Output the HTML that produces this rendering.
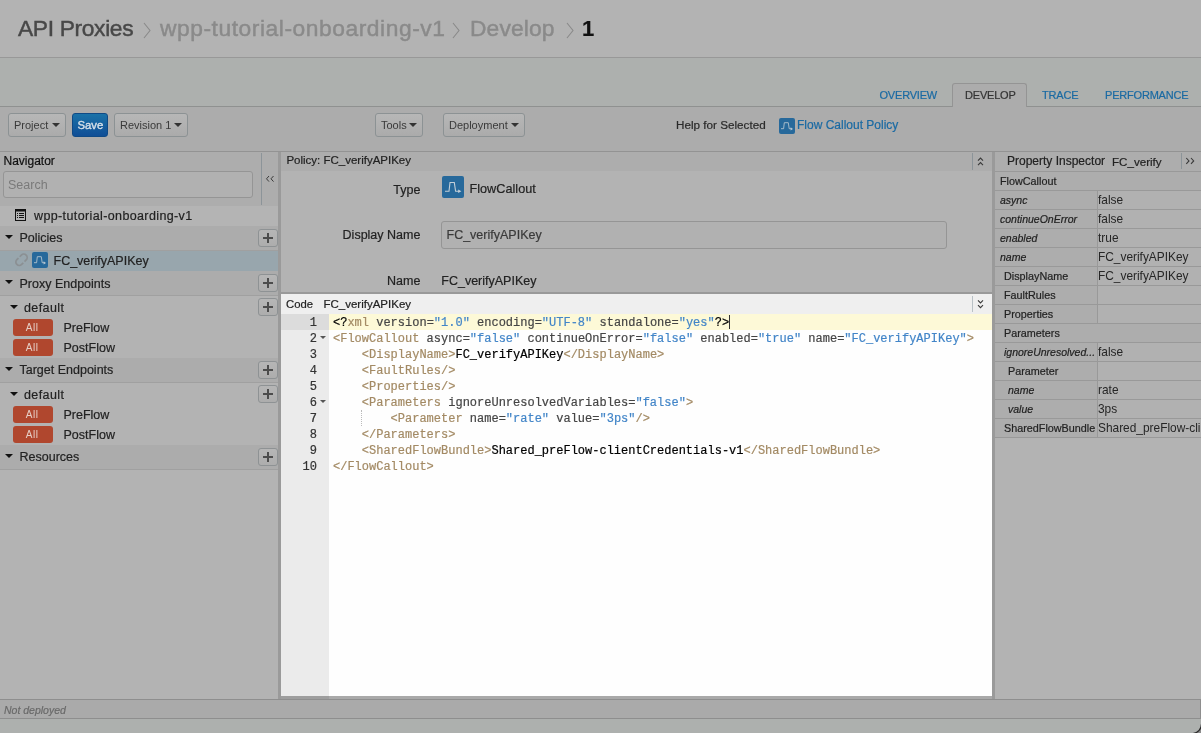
<!DOCTYPE html>
<html><head><meta charset="utf-8"><style>
*{box-sizing:border-box;margin:0;padding:0}
html,body{width:1201px;height:733px;overflow:hidden;background:#adb0ae;font-family:"Liberation Sans",sans-serif;color:#333}
#root{position:absolute;left:0;top:0;width:1201px;height:733px;overflow:hidden;will-change:transform;background:#adb0ae}
.a{position:absolute;white-space:nowrap;line-height:normal;-webkit-text-stroke:0.2px currentColor}
.btn{position:absolute;height:24px;top:113px;border:1px solid #8c9294;border-radius:3px;background:linear-gradient(#b7b7b7,#ababab)}
.car{position:absolute;width:0;height:0;border-left:4px solid transparent;border-right:4px solid transparent;border-top:4px solid #333}
.tri{position:absolute;width:0;height:0;border-left:4px solid transparent;border-right:4px solid transparent;border-top:4px solid #111}
.plus{position:absolute;left:258px;width:20px;height:18px;border:1px solid #8e9294;border-radius:3px;background:linear-gradient(#b6b6b6,#adadad)}
.plus:before{content:"";position:absolute;left:4px;top:7px;width:10px;height:2px;background:#4c4c4c}
.plus:after{content:"";position:absolute;left:8px;top:3px;width:2px;height:10px;background:#4c4c4c}
.all{position:absolute;left:13px;width:40px;height:17px;border-radius:3px;background:#b0472e}
.mono{font-family:"Liberation Mono",monospace;white-space:pre}
.t{color:#a38a64}
.s{color:#4285c8}
.k{color:#000}
</style></head><body><div id="root">
<div class="a" style="left:0px;top:0px;width:1201px;height:57px;background:#b3b3b3;"></div>
<div class="a" style="left:0px;top:57px;width:1201px;height:1px;background:#989898;"></div>
<div class="a" style="left:0px;top:58px;width:1201px;height:48px;background:#adb0ae;"></div>
<div class="a" style="left:0px;top:106px;width:1201px;height:1px;background:#8f9190;"></div>
<div class="a" style="left:18px;top:15.37px;font-size:22.8px;color:#484848;letter-spacing:-0.35px;-webkit-text-stroke:0.45px currentColor">API Proxies</div>
<svg class="a" style="left:143px;top:22px" width="8" height="17"><polyline points="1,1 7,8.5 1,16" fill="none" stroke="#8a8a8a" stroke-width="1.1"/></svg>
<div class="a" style="left:160px;top:15.37px;font-size:22.8px;color:#8a8a8a;letter-spacing:0.55px;-webkit-text-stroke:0.45px currentColor">wpp-tutorial-onboarding-v1</div>
<svg class="a" style="left:452px;top:22px" width="8" height="17"><polyline points="1,1 7,8.5 1,16" fill="none" stroke="#8a8a8a" stroke-width="1.1"/></svg>
<div class="a" style="left:470px;top:15.37px;font-size:22.8px;color:#8a8a8a;letter-spacing:0.15px;-webkit-text-stroke:0.45px currentColor">Develop</div>
<svg class="a" style="left:566px;top:22px" width="8" height="17"><polyline points="1,1 7,8.5 1,16" fill="none" stroke="#8a8a8a" stroke-width="1.1"/></svg>
<div class="a" style="left:582px;top:16.09px;font-size:22px;color:#111;font-weight:bold">1</div>
<div class="a" style="left:952px;top:83px;width:75px;height:24px;border:1px solid #949494;border-bottom:none;border-radius:3px 3px 0 0;background:#acacac"></div>
<div class="a" style="left:879.5px;top:89.05px;font-size:11px;color:#1a6aa3;letter-spacing:-0.2px">OVERVIEW</div>
<div class="a" style="left:965px;top:89.05px;font-size:11px;color:#333;letter-spacing:-0.2px">DEVELOP</div>
<div class="a" style="left:1042px;top:89.05px;font-size:11px;color:#1a6aa3;letter-spacing:-0.2px">TRACE</div>
<div class="a" style="left:1105px;top:89.05px;font-size:11px;color:#1a6aa3;letter-spacing:-0.2px">PERFORMANCE</div>
<div class="a" style="left:0px;top:107px;width:1201px;height:44px;background:#acacac;"></div>
<div class="a" style="left:0px;top:151px;width:1201px;height:1px;background:#939393;"></div>
<div class="btn" style="left:8px;width:58px"></div>
<div class="a" style="left:14px;top:118.85px;font-size:11px;color:#3a3a3a;-webkit-text-stroke:0">Project</div>
<div class="car" style="left:52px;top:123px"></div>
<div class="btn" style="left:72px;width:36px;background:linear-gradient(#1a72a8,#104e96);border-color:#0f4a86"></div>
<div class="a" style="left:77.5px;top:118.57px;font-size:11.3px;color:#d8e2ea;-webkit-text-stroke:0.35px currentColor">Save</div>
<div class="btn" style="left:114px;width:74px"></div>
<div class="a" style="left:120px;top:118.85px;font-size:11px;color:#3a3a3a;-webkit-text-stroke:0">Revision 1</div>
<div class="car" style="left:174px;top:123px"></div>
<div class="btn" style="left:375px;width:48px"></div>
<div class="a" style="left:381px;top:118.85px;font-size:11px;color:#3a3a3a;-webkit-text-stroke:0">Tools</div>
<div class="car" style="left:409px;top:123px"></div>
<div class="btn" style="left:443px;width:82px"></div>
<div class="a" style="left:449px;top:118.85px;font-size:11px;color:#3a3a3a;-webkit-text-stroke:0">Deployment</div>
<div class="car" style="left:511px;top:123px"></div>
<div class="a" style="left:676px;top:117.71px;font-size:11.7px;color:#2a2a2a;">Help for Selected</div>
<svg class="a" style="left:779px;top:118px" width="16" height="16"><rect width="16" height="16" rx="2" fill="#27699b"/><path d="M2 10.7 L4.6 10.7 L5.3 4.7 L9.3 4.7 L10.2 10.7 L12 10.7" fill="none" stroke="#b9c7d1" stroke-width="0.85"/><path d="M11.6 9.3 L14 11 L11.6 12.5Z" fill="#b9c7d1"/></svg>
<div class="a" style="left:797px;top:118.14px;font-size:12px;color:#1a6aa3;">Flow Callout Policy</div>
<div class="a" style="left:0px;top:152px;width:278px;height:547px;background:#b3b3b3;"></div>
<div class="a" style="left:0px;top:152px;width:278px;height:54px;background:#adadad;"></div>
<div class="a" style="left:261px;top:153px;width:1px;height:52px;background:#8c9499;"></div>
<div class="a" style="left:3.5px;top:153.84px;font-size:12px;color:#111;">Navigator</div>
<div class="a" style="left:3px;top:171px;width:250px;height:27px;border:1px solid #959595;border-radius:3px;background:#b1b1b1"></div>
<div class="a" style="left:8px;top:177.59px;font-size:12.5px;color:#7a7a7a;-webkit-text-stroke:0">Search</div>
<svg class="a" style="left:265px;top:175px" width="10" height="8"><path d="M4 1 L1.5 3.8 L4 6.6 M8.5 1 L6 3.8 L8.5 6.6" fill="none" stroke="#3a3a3a" stroke-width="1"/></svg>
<div class="a" style="left:278px;top:152px;width:3px;height:547px;background:#9a9a9a;"></div>
<div class="a" style="left:0px;top:206px;width:278px;height:20px;background:#b4b4b4;"></div>
<svg class="a" style="left:15px;top:209px" width="11" height="12"><rect x="0.5" y="0.5" width="10" height="11" fill="none" stroke="#111"/><path d="M0.5 1.5H10.5" stroke="#111" stroke-width="2"/><path d="M2 4.5h1M4 4.5h5M2 6.5h1M4 6.5h5M2 8.5h1M4 8.5h5" stroke="#111"/></svg>
<div class="a" style="left:34px;top:208.69px;font-size:12.5px;color:#222;letter-spacing:0.38px">wpp-tutorial-onboarding-v1</div>
<div class="a" style="left:0px;top:226px;width:278px;height:24px;background:#acacac;"></div>
<div class="a" style="left:0px;top:250px;width:278px;height:1px;background:#a0a0a0;"></div>
<div class="tri" style="left:5px;top:235px"></div>
<div class="a" style="left:19.5px;top:231.49px;font-size:12.5px;color:#222;">Policies</div>
<div class="plus" style="top:229px"></div>
<div class="a" style="left:0px;top:251px;width:278px;height:20px;background:#98a6ad;"></div>
<svg class="a" style="left:14px;top:253px" width="15" height="14"><g transform="translate(7.5 6.8) rotate(-45)" fill="none" stroke="#8b9093" stroke-width="1.7" stroke-linecap="butt"><path d="M-0.9 -3.4 L-3.2 -3.4 A3.4 3.4 0 0 0 -3.2 3.4 L-0.9 3.4"/><path d="M0.9 -3.4 L3.2 -3.4 A3.4 3.4 0 0 1 3.2 3.4 L0.9 3.4"/></g></svg>
<svg class="a" style="left:32px;top:252px" width="16" height="16"><rect width="16" height="16" rx="2" fill="#27699b"/><path d="M2 10.7 L4.6 10.7 L5.3 4.7 L9.3 4.7 L10.2 10.7 L12 10.7" fill="none" stroke="#b9c7d1" stroke-width="0.85"/><path d="M11.6 9.3 L14 11 L11.6 12.5Z" fill="#b9c7d1"/></svg>
<div class="a" style="left:53.5px;top:254.29px;font-size:12.5px;color:#222;">FC_verifyAPIKey</div>
<div class="a" style="left:0px;top:271px;width:278px;height:24px;background:#acacac;"></div>
<div class="a" style="left:0px;top:295px;width:278px;height:1px;background:#a0a0a0;"></div>
<div class="tri" style="left:5px;top:280px"></div>
<div class="a" style="left:19.5px;top:276.69px;font-size:12.5px;color:#222;">Proxy Endpoints</div>
<div class="plus" style="top:274px"></div>
<div class="tri" style="left:10px;top:305px"></div>
<div class="a" style="left:24px;top:300.89px;font-size:12.5px;color:#222;letter-spacing:0.4px">default</div>
<div class="plus" style="top:298px"></div>
<div class="all" style="top:319px"></div>
<div class="a" style="left:25.8px;top:321.95px;font-size:10px;color:#e6cfc6;letter-spacing:0.5px;-webkit-text-stroke:0">All</div>
<div class="a" style="left:63.5px;top:320.99px;font-size:12.5px;color:#222;">PreFlow</div>
<div class="all" style="top:339px"></div>
<div class="a" style="left:25.8px;top:341.95px;font-size:10px;color:#e6cfc6;letter-spacing:0.5px;-webkit-text-stroke:0">All</div>
<div class="a" style="left:63.5px;top:340.99px;font-size:12.5px;color:#222;">PostFlow</div>
<div class="a" style="left:0px;top:358px;width:278px;height:24px;background:#acacac;"></div>
<div class="a" style="left:0px;top:382px;width:278px;height:1px;background:#a0a0a0;"></div>
<div class="tri" style="left:5px;top:367px"></div>
<div class="a" style="left:19.5px;top:363.19px;font-size:12.5px;color:#222;">Target Endpoints</div>
<div class="plus" style="top:361px"></div>
<div class="tri" style="left:10px;top:392px"></div>
<div class="a" style="left:24px;top:387.89px;font-size:12.5px;color:#222;letter-spacing:0.4px">default</div>
<div class="plus" style="top:385px"></div>
<div class="all" style="top:406px"></div>
<div class="a" style="left:25.8px;top:408.95px;font-size:10px;color:#e6cfc6;letter-spacing:0.5px;-webkit-text-stroke:0">All</div>
<div class="a" style="left:63.5px;top:407.99px;font-size:12.5px;color:#222;">PreFlow</div>
<div class="all" style="top:426px"></div>
<div class="a" style="left:25.8px;top:428.95px;font-size:10px;color:#e6cfc6;letter-spacing:0.5px;-webkit-text-stroke:0">All</div>
<div class="a" style="left:63.5px;top:427.99px;font-size:12.5px;color:#222;">PostFlow</div>
<div class="a" style="left:0px;top:445px;width:278px;height:24px;background:#acacac;"></div>
<div class="a" style="left:0px;top:469px;width:278px;height:1px;background:#a0a0a0;"></div>
<div class="tri" style="left:5px;top:454px"></div>
<div class="a" style="left:19.5px;top:450.19px;font-size:12.5px;color:#222;">Resources</div>
<div class="plus" style="top:448px"></div>
<div class="a" style="left:281px;top:152px;width:711px;height:141px;background:#b3b3b3;"></div>
<div class="a" style="left:281px;top:152px;width:711px;height:19px;background:#adadad;"></div>
<div class="a" style="left:281px;top:292px;width:711px;height:2px;background:#999999;"></div>
<div class="a" style="left:286.4px;top:154.49px;font-size:11.5px;color:#222;">Policy: FC_verifyAPIKey</div>
<div class="a" style="left:972px;top:153px;width:1px;height:17px;background:#8c9499;"></div>
<svg class="a" style="left:977px;top:157px" width="7" height="10"><path d="M1 3.6 L3.5 1 L6 3.6 M1 8.2 L3.5 5.6 L6 8.2" fill="none" stroke="#3a3a3a" stroke-width="1.1"/></svg>
<div class="a" style="left:992px;top:152px;width:3px;height:547px;background:#9a9a9a;"></div>
<div class="a" style="left:20.399999999999977px;width:400px;text-align:right;top:182.59px;font-size:12.5px;color:#222;">Type</div>
<svg class="a" style="left:442px;top:176px" width="22" height="22"><rect width="22" height="22" rx="2" fill="#27699b"/><path d="M3 15.3 L7 15.3 L8 6.5 L12.3 6.5 L13.6 15.3 L17 15.3" fill="none" stroke="#c3cfd8" stroke-width="1.1"/><path d="M16.2 13.5 L19.4 15.3 L16.2 17.1 Z" fill="#c3cfd8"/></svg>
<div class="a" style="left:469.5px;top:182.41px;font-size:12.7px;color:#222;">FlowCallout</div>
<div class="a" style="left:20.399999999999977px;width:400px;text-align:right;top:228.19px;font-size:12.5px;color:#222;">Display Name</div>
<div class="a" style="left:441px;top:221px;width:506px;height:28px;border:1px solid #959595;border-radius:3px;background:#b1b1b1"></div>
<div class="a" style="left:446.5px;top:228.19px;font-size:12.5px;color:#3a3a3a;">FC_verifyAPIKey</div>
<div class="a" style="left:20.399999999999977px;width:400px;text-align:right;top:273.89px;font-size:12.5px;color:#222;">Name</div>
<div class="a" style="left:441.3px;top:273.89px;font-size:12.5px;color:#222;">FC_verifyAPIKey</div>
<div class="a" style="left:281px;top:294px;width:711px;height:402px;background:#fefefe;"></div>
<div class="a" style="left:281px;top:696px;width:48px;height:3px;background:#9e9e9e;"></div>
<div class="a" style="left:329px;top:696px;width:663px;height:3px;background:#a9a9a9;"></div>
<div class="a" style="left:281px;top:294px;width:711px;height:20px;background:#efefef;"></div>
<div class="a" style="left:286px;top:297.77px;font-size:11.3px;color:#222;">Code</div>
<div class="a" style="left:323.5px;top:297.59px;font-size:11.5px;color:#222;">FC_verifyAPIKey</div>
<div class="a" style="left:972px;top:296px;width:1px;height:16px;background:#b9c1c6;"></div>
<svg class="a" style="left:977px;top:299px" width="7" height="10"><path d="M1 1.3 L3.5 3.9 L6 1.3 M1 6.1 L3.5 8.7 L6 6.1" fill="none" stroke="#3a3a3a" stroke-width="1.1"/></svg>
<div class="a" style="left:281px;top:314px;width:48px;height:382px;background:#ebebeb;"></div>
<div class="a" style="left:281px;top:314px;width:48px;height:16px;background:#dcdcdc;"></div>
<div class="a" style="left:329px;top:314px;width:663px;height:16px;background:#fdf9d7;"></div>
<div class="a mono" style="left:281px;top:316.00px;width:36px;text-align:right;font-size:12px;color:#333">1</div>
<div class="a mono" style="left:333px;top:316.00px;font-size:12px;color:#454545"><span class="k">&lt;?</span><span class="t">xml</span> version=<span class="s">"1.0"</span> encoding=<span class="s">"UTF-8"</span> standalone=<span class="s">"yes"</span><span class="k">?&gt;</span></div>
<div class="a mono" style="left:281px;top:332.00px;width:36px;text-align:right;font-size:12px;color:#333">2</div>
<div class="a mono" style="left:333px;top:332.00px;font-size:12px;color:#454545"><span class="t">&lt;FlowCallout</span> async=<span class="s">"false"</span> continueOnError=<span class="s">"false"</span> enabled=<span class="s">"true"</span> name=<span class="s">"FC_verifyAPIKey"</span><span class="t">&gt;</span></div>
<div class="a mono" style="left:281px;top:348.00px;width:36px;text-align:right;font-size:12px;color:#333">3</div>
<div class="a mono" style="left:333px;top:348.00px;font-size:12px;color:#454545">    <span class="t">&lt;DisplayName&gt;</span><span class="k">FC_verifyAPIKey</span><span class="t">&lt;/DisplayName&gt;</span></div>
<div class="a mono" style="left:281px;top:364.00px;width:36px;text-align:right;font-size:12px;color:#333">4</div>
<div class="a mono" style="left:333px;top:364.00px;font-size:12px;color:#454545">    <span class="t">&lt;FaultRules/&gt;</span></div>
<div class="a mono" style="left:281px;top:380.00px;width:36px;text-align:right;font-size:12px;color:#333">5</div>
<div class="a mono" style="left:333px;top:380.00px;font-size:12px;color:#454545">    <span class="t">&lt;Properties/&gt;</span></div>
<div class="a mono" style="left:281px;top:396.00px;width:36px;text-align:right;font-size:12px;color:#333">6</div>
<div class="a mono" style="left:333px;top:396.00px;font-size:12px;color:#454545">    <span class="t">&lt;Parameters</span> ignoreUnresolvedVariables=<span class="s">"false"</span><span class="t">&gt;</span></div>
<div class="a mono" style="left:281px;top:412.00px;width:36px;text-align:right;font-size:12px;color:#333">7</div>
<div class="a mono" style="left:333px;top:412.00px;font-size:12px;color:#454545">        <span class="t">&lt;Parameter</span> name=<span class="s">"rate"</span> value=<span class="s">"3ps"</span><span class="t">/&gt;</span></div>
<div class="a mono" style="left:281px;top:428.00px;width:36px;text-align:right;font-size:12px;color:#333">8</div>
<div class="a mono" style="left:333px;top:428.00px;font-size:12px;color:#454545">    <span class="t">&lt;/Parameters&gt;</span></div>
<div class="a mono" style="left:281px;top:444.00px;width:36px;text-align:right;font-size:12px;color:#333">9</div>
<div class="a mono" style="left:333px;top:444.00px;font-size:12px;color:#454545">    <span class="t">&lt;SharedFlowBundle&gt;</span><span class="k">Shared_preFlow-clientCredentials-v1</span><span class="t">&lt;/SharedFlowBundle&gt;</span></div>
<div class="a mono" style="left:281px;top:460.00px;width:36px;text-align:right;font-size:12px;color:#333">10</div>
<div class="a mono" style="left:333px;top:460.00px;font-size:12px;color:#454545"><span class="t">&lt;/FlowCallout&gt;</span></div>
<div class="tri" style="left:320px;top:336px;border-width:3px 3px 0 3px;border-top-color:#555"></div>
<div class="tri" style="left:320px;top:400px;border-width:3px 3px 0 3px;border-top-color:#555"></div>
<div class="a" style="left:729px;top:315px;width:1px;height:14px;background:#333;"></div>
<div class="a" style="left:361px;top:410px;width:0;height:16px;border-left:1px dotted #bbb"></div>
<div class="a" style="left:995px;top:152px;width:206px;height:547px;background:#b3b3b3;"></div>
<div class="a" style="left:995px;top:152px;width:206px;height:19px;background:#adadad;"></div>
<div class="a" style="left:995px;top:171px;width:206px;height:1px;background:#999;"></div>
<div class="a" style="left:1007px;top:154.14px;font-size:12px;color:#222;">Property Inspector</div>
<div class="a" style="left:1112px;top:154.50px;font-size:11.6px;color:#222;">FC_verify</div>
<div class="a" style="left:1181px;top:153px;width:1px;height:16px;background:#8c9499;"></div>
<svg class="a" style="left:1185px;top:157px" width="10" height="8"><path d="M1.3 1 L4 3.9 L1.3 6.8 M6 1 L8.7 3.9 L6 6.8" fill="none" stroke="#3a3a3a" stroke-width="1.1"/></svg>
<div class="a" style="left:995px;top:172px;width:206px;height:18px;background:#adadad;"></div>
<div class="a" style="left:995px;top:190px;width:206px;height:1px;background:#999;"></div>
<div class="a" style="left:1000px;top:175.23px;font-size:10.8px;color:#222;">FlowCallout</div>
<div class="a" style="left:995px;top:191px;width:102px;height:18px;background:#adadad;"></div>
<div class="a" style="left:1097px;top:191px;width:1px;height:18px;background:#999;"></div>
<div class="a" style="left:1098px;top:191px;width:103px;height:18px;background:#b1b1b1;"></div>
<div class="a" style="left:995px;top:209px;width:206px;height:1px;background:#999;"></div>
<div class="a" style="left:1000px;top:193.80px;font-size:10.5px;color:#222;font-style:italic">async</div>
<div class="a" style="left:1098px;top:191px;width:103px;height:18px;overflow:hidden"><div class="a" style="left:0;top:2.23px;font-size:11.9px;color:#262626;-webkit-text-stroke:0">false</div></div>
<div class="a" style="left:995px;top:210px;width:102px;height:18px;background:#adadad;"></div>
<div class="a" style="left:1097px;top:210px;width:1px;height:18px;background:#999;"></div>
<div class="a" style="left:1098px;top:210px;width:103px;height:18px;background:#b1b1b1;"></div>
<div class="a" style="left:995px;top:228px;width:206px;height:1px;background:#999;"></div>
<div class="a" style="left:1000px;top:212.80px;font-size:10.5px;color:#222;font-style:italic">continueOnError</div>
<div class="a" style="left:1098px;top:210px;width:103px;height:18px;overflow:hidden"><div class="a" style="left:0;top:2.23px;font-size:11.9px;color:#262626;-webkit-text-stroke:0">false</div></div>
<div class="a" style="left:995px;top:229px;width:102px;height:18px;background:#adadad;"></div>
<div class="a" style="left:1097px;top:229px;width:1px;height:18px;background:#999;"></div>
<div class="a" style="left:1098px;top:229px;width:103px;height:18px;background:#b1b1b1;"></div>
<div class="a" style="left:995px;top:247px;width:206px;height:1px;background:#999;"></div>
<div class="a" style="left:1000px;top:231.80px;font-size:10.5px;color:#222;font-style:italic">enabled</div>
<div class="a" style="left:1098px;top:229px;width:103px;height:18px;overflow:hidden"><div class="a" style="left:0;top:2.23px;font-size:11.9px;color:#262626;-webkit-text-stroke:0">true</div></div>
<div class="a" style="left:995px;top:248px;width:102px;height:18px;background:#adadad;"></div>
<div class="a" style="left:1097px;top:248px;width:1px;height:18px;background:#999;"></div>
<div class="a" style="left:1098px;top:248px;width:103px;height:18px;background:#b1b1b1;"></div>
<div class="a" style="left:995px;top:266px;width:206px;height:1px;background:#999;"></div>
<div class="a" style="left:1000px;top:250.80px;font-size:10.5px;color:#222;font-style:italic">name</div>
<div class="a" style="left:1098px;top:248px;width:103px;height:18px;overflow:hidden"><div class="a" style="left:0;top:2.23px;font-size:11.9px;color:#262626;-webkit-text-stroke:0">FC_verifyAPIKey</div></div>
<div class="a" style="left:995px;top:267px;width:102px;height:18px;background:#adadad;"></div>
<div class="a" style="left:1097px;top:267px;width:1px;height:18px;background:#999;"></div>
<div class="a" style="left:1098px;top:267px;width:103px;height:18px;background:#b1b1b1;"></div>
<div class="a" style="left:995px;top:285px;width:206px;height:1px;background:#999;"></div>
<div class="a" style="left:1004px;top:270.23px;font-size:10.8px;color:#222;">DisplayName</div>
<div class="a" style="left:1098px;top:267px;width:103px;height:18px;overflow:hidden"><div class="a" style="left:0;top:2.23px;font-size:11.9px;color:#262626;-webkit-text-stroke:0">FC_verifyAPIKey</div></div>
<div class="a" style="left:995px;top:286px;width:102px;height:18px;background:#adadad;"></div>
<div class="a" style="left:1097px;top:286px;width:1px;height:18px;background:#999;"></div>
<div class="a" style="left:1098px;top:286px;width:103px;height:18px;background:#b1b1b1;"></div>
<div class="a" style="left:995px;top:304px;width:206px;height:1px;background:#999;"></div>
<div class="a" style="left:1004px;top:289.23px;font-size:10.8px;color:#222;">FaultRules</div>
<div class="a" style="left:995px;top:305px;width:102px;height:18px;background:#adadad;"></div>
<div class="a" style="left:1097px;top:305px;width:1px;height:18px;background:#999;"></div>
<div class="a" style="left:1098px;top:305px;width:103px;height:18px;background:#b1b1b1;"></div>
<div class="a" style="left:995px;top:323px;width:206px;height:1px;background:#999;"></div>
<div class="a" style="left:1004px;top:308.23px;font-size:10.8px;color:#222;">Properties</div>
<div class="a" style="left:995px;top:324px;width:206px;height:18px;background:#adadad;"></div>
<div class="a" style="left:995px;top:342px;width:206px;height:1px;background:#999;"></div>
<div class="a" style="left:1004px;top:327.23px;font-size:10.8px;color:#222;">Parameters</div>
<div class="a" style="left:995px;top:343px;width:102px;height:18px;background:#adadad;"></div>
<div class="a" style="left:1097px;top:343px;width:1px;height:18px;background:#999;"></div>
<div class="a" style="left:1098px;top:343px;width:103px;height:18px;background:#b1b1b1;"></div>
<div class="a" style="left:995px;top:361px;width:206px;height:1px;background:#999;"></div>
<div class="a" style="left:1004px;top:345.80px;font-size:10.5px;color:#222;font-style:italic">ignoreUnresolved...</div>
<div class="a" style="left:1098px;top:343px;width:103px;height:18px;overflow:hidden"><div class="a" style="left:0;top:2.23px;font-size:11.9px;color:#262626;-webkit-text-stroke:0">false</div></div>
<div class="a" style="left:995px;top:362px;width:102px;height:18px;background:#adadad;"></div>
<div class="a" style="left:1097px;top:362px;width:1px;height:18px;background:#999;"></div>
<div class="a" style="left:1098px;top:362px;width:103px;height:18px;background:#b1b1b1;"></div>
<div class="a" style="left:995px;top:380px;width:206px;height:1px;background:#999;"></div>
<div class="a" style="left:1008px;top:365.23px;font-size:10.8px;color:#222;">Parameter</div>
<div class="a" style="left:995px;top:381px;width:102px;height:18px;background:#adadad;"></div>
<div class="a" style="left:1097px;top:381px;width:1px;height:18px;background:#999;"></div>
<div class="a" style="left:1098px;top:381px;width:103px;height:18px;background:#b1b1b1;"></div>
<div class="a" style="left:995px;top:399px;width:206px;height:1px;background:#999;"></div>
<div class="a" style="left:1008px;top:383.80px;font-size:10.5px;color:#222;font-style:italic">name</div>
<div class="a" style="left:1098px;top:381px;width:103px;height:18px;overflow:hidden"><div class="a" style="left:0;top:2.23px;font-size:11.9px;color:#262626;-webkit-text-stroke:0">rate</div></div>
<div class="a" style="left:995px;top:400px;width:102px;height:18px;background:#adadad;"></div>
<div class="a" style="left:1097px;top:400px;width:1px;height:18px;background:#999;"></div>
<div class="a" style="left:1098px;top:400px;width:103px;height:18px;background:#b1b1b1;"></div>
<div class="a" style="left:995px;top:418px;width:206px;height:1px;background:#999;"></div>
<div class="a" style="left:1008px;top:402.80px;font-size:10.5px;color:#222;font-style:italic">value</div>
<div class="a" style="left:1098px;top:400px;width:103px;height:18px;overflow:hidden"><div class="a" style="left:0;top:2.23px;font-size:11.9px;color:#262626;-webkit-text-stroke:0">3ps</div></div>
<div class="a" style="left:995px;top:419px;width:102px;height:18px;background:#adadad;"></div>
<div class="a" style="left:1097px;top:419px;width:1px;height:18px;background:#999;"></div>
<div class="a" style="left:1098px;top:419px;width:103px;height:18px;background:#b1b1b1;"></div>
<div class="a" style="left:995px;top:437px;width:206px;height:1px;background:#999;"></div>
<div class="a" style="left:1004px;top:422.23px;font-size:10.8px;color:#222;">SharedFlowBundle</div>
<div class="a" style="left:1098px;top:419px;width:103px;height:18px;overflow:hidden"><div class="a" style="left:0;top:2.23px;font-size:11.9px;color:#262626;-webkit-text-stroke:0">Shared_preFlow-clientCredentials-v1</div></div>
<div class="a" style="left:0px;top:699px;width:1201px;height:1px;background:#8e8e8e;"></div>
<div class="a" style="left:0px;top:700px;width:1201px;height:18px;background:#aaaaaa;"></div>
<div class="a" style="left:0px;top:718px;width:1201px;height:1px;background:#8e8e8e;"></div>
<div class="a" style="left:1200px;top:699px;width:1px;height:20px;background:#8e8e8e;"></div>
<svg class="a" style="left:1185px;top:718px" width="16" height="15"><path d="M16.5 6 A9.5 9.5 0 0 1 8 15.5 L16.5 15.5 Z" fill="#8c8c8c"/><path d="M16.5 6 A9.5 9.5 0 0 1 8 15.5" fill="none" stroke="#2a2a2a" stroke-width="1.2"/></svg>
<div class="a" style="left:4px;top:703.50px;font-size:10.5px;color:#6a6a6a;font-style:italic">Not deployed</div>
</div></body></html>
